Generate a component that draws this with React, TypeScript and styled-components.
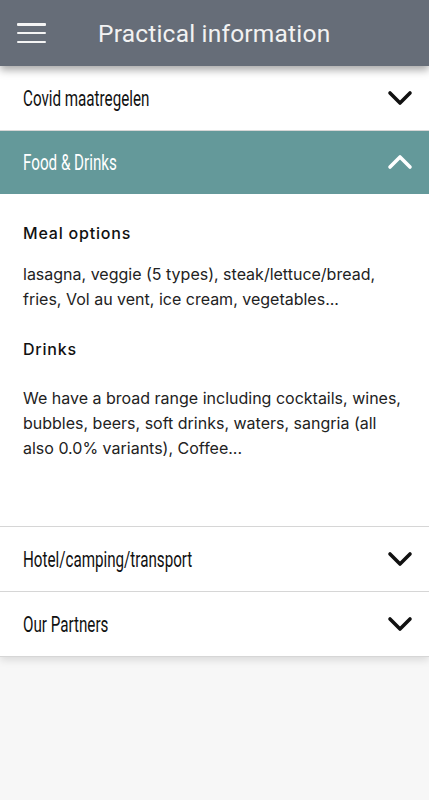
import styled, { createGlobalStyle } from 'styled-components'

const GlobalStyle = createGlobalStyle`
  html, body {
    margin: 0;
    padding: 0;
    background: #f7f7f7;
  }
  * {
    box-sizing: border-box;
  }
`

const Page = styled.div`
  width: 100%;
  min-height: 800px;
  background: #f7f7f7;
`

const Header = styled.header`
  position: relative;
  z-index: 2;
  display: flex;
  align-items: center;
  height: 66px;
  padding-left: 17px;
  background: #666d78;
  box-shadow: 0 4px 8px rgba(0, 0, 0, 0.35);
`

const MenuButton = styled.div`
  display: flex;
  flex-direction: column;
  justify-content: space-between;
  width: 29px;
  height: 20px;
  margin-right: 52px;

  span {
    display: block;
    height: 2.5px;
    background: #f4f4f4;
    border-radius: 1px;
  }
`

const Title = styled.h1`
  margin: 0;
  font-family: Roboto, "Liberation Sans", sans-serif;
  font-weight: 400;
  font-size: 24.5px;
  letter-spacing: 0.2px;
  color: #f2f2f2;
`

const List = styled.div`
  background: #fff;
  box-shadow: 0 3px 8px rgba(0, 0, 0, 0.12);
`

const Row = styled.div<{ $open?: boolean }>`
  display: flex;
  align-items: center;
  justify-content: space-between;
  height: ${p => (p.$open ? '63px' : '65px')};
  padding: 0 16px 0 23px;
  background: ${p => (p.$open ? '#64999a' : '#fff')};
  color: ${p => (p.$open ? '#fff' : '#111')};
  border-bottom: 1px solid ${p => (p.$open ? '#64999a' : '#d6d6d6')};
`

const RowLabel = styled.span`
  display: inline-block;
  font-family: Roboto, "Liberation Sans", sans-serif;
  font-size: 22px;
  transform: scaleX(0.69);
  transform-origin: left center;
  white-space: nowrap;
`

const Content = styled.div`
  padding: 27px 23px 65px;
  background: #fff;
  border-bottom: 1px solid #d6d6d6;
  font-family: Inter, "Liberation Sans", sans-serif;
  color: #222;
`

const Heading = styled.h2<{ $gap: number }>`
  margin: 0 0 ${p => p.$gap}px;
  font-size: 16px;
  font-weight: 500;
  line-height: 24px;
  letter-spacing: 0.8px;
  color: #111;
`

const Para = styled.p<{ $last?: boolean }>`
  margin: 0 0 ${p => (p.$last ? 0 : 25)}px;
  font-size: 16px;
  line-height: 25px;
`

function Chevron({ up }: { up?: boolean }) {
  return (
    <svg width="26" height="16" viewBox="0 0 26 16">
      <path
        d={up ? 'M3 13 L13 3 L23 13' : 'M3 3 L13 13 L23 3'}
        fill="none"
        stroke="currentColor"
        strokeWidth="3.6"
        strokeLinecap="round"
        strokeLinejoin="round"
      />
    </svg>
  )
}

const sections = [
  { title: 'Covid maatregelen', open: false },
  { title: 'Food & Drinks', open: true },
  { title: 'Hotel/camping/transport', open: false },
  { title: 'Our Partners', open: false },
]

function App() {
  return (
    <>
      <GlobalStyle />
      <Page>
        <Header>
          <MenuButton>
            <span />
            <span />
            <span />
          </MenuButton>
          <Title>Practical information</Title>
        </Header>
        <List>
          {sections.map(s => (
            <div key={s.title}>
              <Row $open={s.open}>
                <RowLabel>{s.title}</RowLabel>
                <Chevron up={s.open} />
              </Row>
              {s.open && (
                <Content>
                  <Heading $gap={17}>Meal options</Heading>
                  <Para>
                    lasagna, veggie (5 types), steak/lettuce/bread, fries, Vol au vent, ice cream, vegetables...
                  </Para>
                  <Heading $gap={25}>Drinks</Heading>
                  <Para $last>
                    We have a broad range including cocktails, wines, bubbles, beers, soft drinks, waters, sangria (all also 0.0% variants), Coffee...
                  </Para>
                </Content>
              )}
            </div>
          ))}
        </List>
      </Page>
    </>
  )
}

export default App
